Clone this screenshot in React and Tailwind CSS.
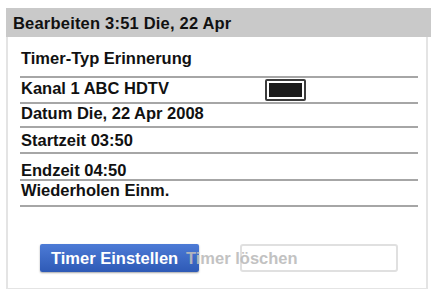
const ROWS = [
  { label: 'Startzeit 03:50', cls: 'h-[26px] pt-[3px]' },
  { label: 'Endzeit 04:50', cls: 'h-[27px] pt-[7px]' },
  { label: 'Wiederholen Einm.', cls: 'h-[26px] pt-0' },
]

export default function App() {
  return (
    <div className="w-[431px] h-[289px] overflow-hidden bg-white pt-[8px] pl-[6px] font-['Liberation_Sans',Arial,sans-serif] text-[#111]">
      <div className="h-[281px] flex flex-col">
        {/* Header */}
        <div className="h-[29px] bg-[#c9c9c9] pl-[7px] flex items-center">
          <span className="text-[16.5px] leading-[18px] font-bold tracking-[0.2px]">Bearbeiten 3:51 Die, 22 Apr</span>
        </div>

        {/* Body */}
        <div className="flex-1 mr-[3px] border-l-2 border-r-2 border-b border-[#e4e4e4] pl-[12px] pr-[8px]">
          <div className="h-[41px] pt-[12px] border-b-2 border-[#a6a6a6]">
            <p className="px-[1px] text-[16.5px] leading-[18px] font-bold">Timer-Typ Erinnerung</p>
          </div>
          <div className="h-[26px] pt-[1px] border-b-2 border-[#a6a6a6] flex items-start">
            <p className="w-[245px] px-[1px] text-[16.5px] leading-[18px] font-bold">Kanal 1 ABC HDTV</p>
            <div className="w-[41px] h-[22px] border-2 border-[#3c3c3c] rounded-[2px] bg-white p-[2px]">
              <div className="w-full h-full bg-[#1b1b1b]" />
            </div>
          </div>
          <div className="h-[24px] pt-0 border-b-2 border-[#a6a6a6]">
            <p className="px-[1px] text-[16.5px] leading-[18px] font-bold">Datum Die, 22 Apr 2008</p>
          </div>
          {ROWS.map(r => (
            <div key={r.label} className={`${r.cls} border-b-2 border-[#a6a6a6]`}>
              <p className="px-[1px] text-[16.5px] leading-[18px] font-bold">{r.label}</p>
            </div>
          ))}

          {/* Buttons */}
          <div className="mt-[37px] ml-[20px] flex items-center">
            <button className="w-[159px] h-[28px] rounded-[2px] bg-gradient-to-b from-[#4d7bd6] to-[#2e5ab6] shadow-[0_1px_2px_rgba(0,0,0,0.35)] text-left pl-[11px] text-white text-[16.5px] leading-[18px] font-bold">
              Timer Einstellen
            </button>
            <div className="relative ml-[41px] w-[158px] h-[28px] rounded-[3px] border-2 border-[#e0e0e0]">
              <span className="absolute left-[-56px] top-[3px] whitespace-nowrap text-[16.5px] leading-[18px] font-bold text-[#bcbcbc] opacity-90">Timer löschen</span>
            </div>
          </div>
        </div>
      </div>
    </div>
  )
}
